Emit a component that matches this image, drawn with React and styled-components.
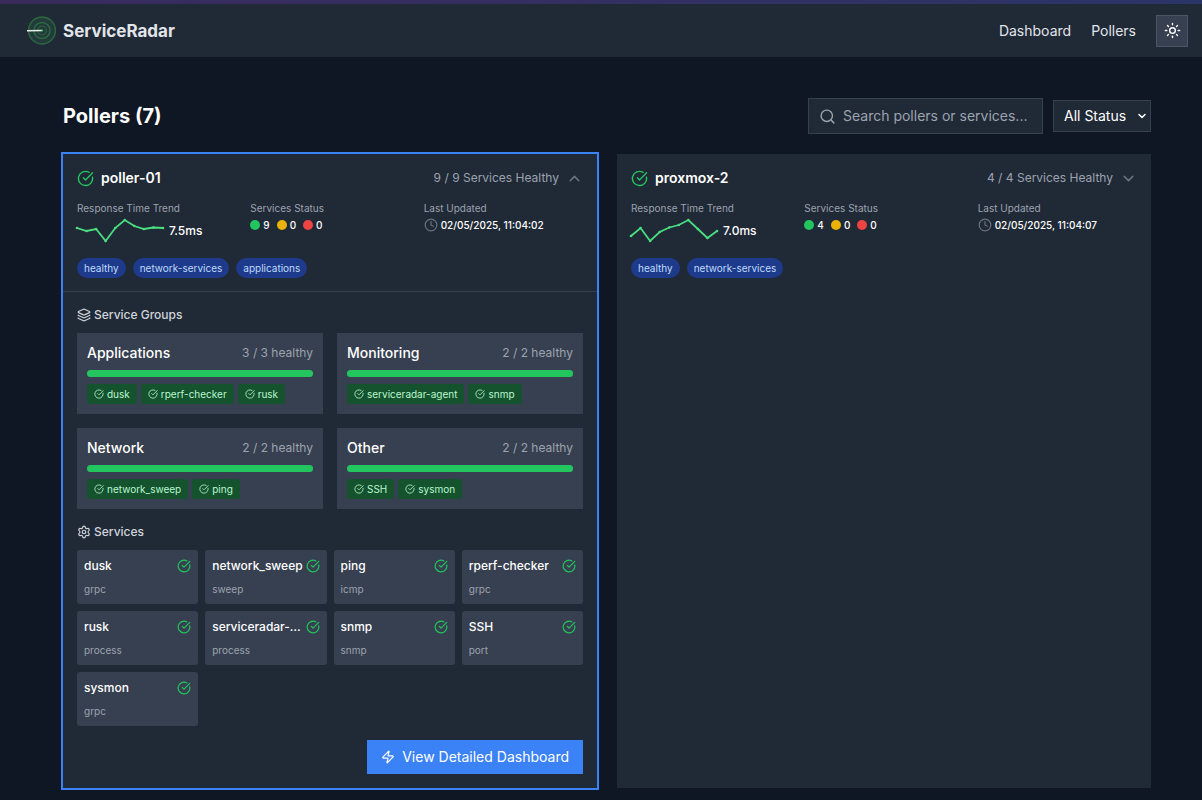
import React, { useState } from 'react';
import styled, { createGlobalStyle, ThemeProvider } from 'styled-components';
import {
  ChevronDown,
  ChevronUp,
  CircleCheckBig,
  Clock,
  Layers,
  Search,
  Settings,
  Sun,
  Zap,
} from 'lucide-react';

const theme = {
  page: '#0f1624',
  panel: '#202936',
  raised: '#374050',
  border: '#374050',
  accent: '#3b82f6',
  green: '#22c55e',
  yellow: '#eab308',
  red: '#ef4444',
  text: '#ffffff',
  soft: '#e2e5ea',
  muted: '#9ca3af',
  faint: '#6b7280',
};

const GlobalStyle = createGlobalStyle`
  *, *::before, *::after {
    box-sizing: border-box;
  }

  body {
    margin: 0;
    background: ${theme.page};
    color: ${theme.text};
    font-family: Inter, "Liberation Sans", sans-serif;
    font-size: 14px;
    line-height: 20px;
  }

  h1, h2, h3, h4, p, ul, dl, dd {
    margin: 0;
    padding: 0;
  }

  button, input, select {
    font: inherit;
    color: inherit;
  }

  svg {
    flex-shrink: 0;
  }
`;

const Page = styled.div`
  min-height: 100vh;
`;

const AccentStrip = styled.div`
  height: 4px;
  background: linear-gradient(90deg, #3a2a5c, #2b3566);
`;

const Header = styled.header`
  display: flex;
  align-items: center;
  justify-content: space-between;
  height: 53px;
  padding: 0 14px 0 27px;
  background: ${({ theme }) => theme.panel};
`;

const Brand = styled.a`
  display: flex;
  align-items: center;
  gap: 7px;
  color: ${({ theme }) => theme.soft};
  font-size: 17px;
  font-weight: 700;
  text-decoration: none;
`;

const Nav = styled.nav`
  display: flex;
  align-items: center;
  gap: 20px;
`;

const NavLink = styled.a`
  color: ${({ theme }) => theme.soft};
  text-decoration: none;
`;

const ThemeButton = styled.button`
  display: flex;
  align-items: center;
  justify-content: center;
  width: 32px;
  height: 32px;
  padding: 0;
  background: ${({ theme }) => theme.raised};
  border: 1px solid #4b5563;
`;

const Main = styled.main`
  padding: 41px 51px 10px 63px;
`;

const Toolbar = styled.div`
  display: flex;
  align-items: center;
  justify-content: space-between;
  margin-bottom: 20px;
`;

const Title = styled.h1`
  font-size: 20px;
  line-height: 28px;
  font-weight: 700;
`;

const Filters = styled.div`
  display: flex;
  align-items: center;
  gap: 10px;
`;

const SearchBox = styled.label`
  display: flex;
  align-items: center;
  gap: 7px;
  width: 235px;
  height: 36px;
  padding: 0 10px;
  background: ${({ theme }) => theme.panel};
  border: 1px solid ${({ theme }) => theme.border};
  color: ${({ theme }) => theme.muted};
`;

const SearchInput = styled.input`
  flex: 1;
  min-width: 0;
  padding: 0;
  background: none;
  border: none;
  outline: none;
  color: ${({ theme }) => theme.text};

  &::placeholder {
    color: ${({ theme }) => theme.muted};
    opacity: 1;
  }
`;

const SelectWrap = styled.div`
  display: grid;
  align-items: center;

  && > * {
    grid-area: 1 / 1;
  }

  svg {
    justify-self: end;
    margin-right: 3px;
    pointer-events: none;
  }
`;

const StatusSelect = styled.select`
  appearance: none;
  width: 98px;
  height: 32px;
  padding: 0 10px;
  background: ${({ theme }) => theme.panel};
  border: 1px solid ${({ theme }) => theme.border};
  border-radius: 0;
`;

const CardGrid = styled.div`
  display: grid;
  grid-template-columns: repeat(2, minmax(0, 1fr));
  gap: 20px;
`;

const Card = styled.article`
  background: ${({ theme }) => theme.panel};
  box-shadow: ${({ $open, theme }) => ($open ? `0 0 0 2px ${theme.accent}` : 'none')};
`;

const CardTop = styled.div`
  padding: 14px 14px 13px;
`;

const CardHeader = styled.button`
  display: flex;
  align-items: center;
  justify-content: space-between;
  width: 100%;
  height: 20px;
  margin-bottom: 13px;
  padding: 0;
  background: none;
  border: none;
  text-align: left;
`;

const PollerName = styled.span`
  display: flex;
  align-items: center;
  gap: 7px;
  font-weight: 600;

  svg {
    color: ${({ theme }) => theme.green};
  }
`;

const HealthSummary = styled.span`
  display: flex;
  align-items: center;
  gap: 7px;
  color: ${({ theme }) => theme.muted};
  font-size: 12px;

  svg {
    color: ${({ theme }) => theme.faint};
  }
`;

const Stats = styled.dl`
  display: grid;
  grid-template-columns: repeat(3, 1fr);
  gap: 14px;
`;

const StatLabel = styled.dt`
  color: ${({ theme }) => theme.muted};
  font-size: 10px;
  line-height: 14px;
`;

const StatValue = styled.dd`
  display: flex;
  align-items: center;
  gap: ${({ $gap }) => $gap || 3}px;
  min-height: 20px;
  font-size: ${({ $large }) => ($large ? 12 : 10)}px;
  font-weight: 500;

  > svg {
    color: ${({ theme }) => theme.faint};
  }
`;

const Spark = styled.svg`
  width: 86px;
  height: 32px;
  overflow: visible;
`;

const Count = styled.span`
  display: flex;
  align-items: center;
  gap: 3px;
`;

const Dot = styled.span`
  width: 10px;
  height: 10px;
  border-radius: 50%;
  background: ${({ theme, $tone }) => theme[$tone]};
`;

const Tags = styled.ul`
  display: flex;
  flex-wrap: wrap;
  gap: 7px;
  margin-top: 11px;
  list-style: none;
`;

const Tag = styled.li`
  padding: 3px 7px;
  border-radius: 10px;
  background: #1e3a8a;
  color: #bfdbfe;
  font-size: 10px;
  line-height: 14px;
`;

const CardBody = styled.div`
  display: flex;
  flex-direction: column;
  gap: 14px;
  padding: 14px;
  border-top: 1px solid ${({ theme }) => theme.border};
`;

const SectionTitle = styled.h3`
  display: flex;
  align-items: center;
  gap: 3px;
  margin-bottom: 10px;
  color: #d1d5db;
  font-size: 12px;
  line-height: 17px;
  font-weight: 500;
`;

const GroupGrid = styled.div`
  display: grid;
  grid-template-columns: repeat(2, minmax(0, 1fr));
  gap: 14px;
`;

const Group = styled.div`
  display: flex;
  flex-direction: column;
  gap: 7px;
  padding: 10px;
  background: ${({ theme }) => theme.raised};
`;

const GroupHead = styled.div`
  display: flex;
  align-items: center;
  justify-content: space-between;
`;

const GroupName = styled.h4`
  font-size: 14px;
  font-weight: 500;
`;

const GroupCount = styled.span`
  color: ${({ theme }) => theme.muted};
  font-size: 12px;
`;

const Bar = styled.div`
  height: 7px;
  border-radius: 4px;
  background: #4b5563;
`;

const BarFill = styled.div`
  height: 100%;
  border-radius: 4px;
  background: ${({ theme }) => theme.green};
`;

const Chips = styled.ul`
  display: flex;
  flex-wrap: wrap;
  gap: 4px;
  list-style: none;
`;

const Chip = styled.li`
  display: flex;
  align-items: center;
  gap: 3px;
  padding: 3px 7px;
  border-radius: 3px;
  background: #14532d;
  color: #bbf7d0;
  font-size: 10px;
  line-height: 14px;
`;

const ServiceGrid = styled.div`
  display: grid;
  grid-template-columns: repeat(4, minmax(0, 1fr));
  gap: 7px;
`;

const Service = styled.div`
  padding: 7px 7px 8px;
  border-radius: 3px;
  background: ${({ theme }) => theme.raised};
`;

const ServiceHead = styled.div`
  display: flex;
  align-items: center;
  justify-content: space-between;
  margin-bottom: 8px;

  svg {
    color: ${({ theme }) => theme.green};
  }
`;

const ServiceName = styled.span`
  overflow: hidden;
  font-size: 12px;
  line-height: 17px;
  font-weight: 500;
  text-overflow: ellipsis;
  white-space: nowrap;
`;

const ServiceType = styled.p`
  color: ${({ theme }) => theme.muted};
  font-size: 10px;
  line-height: 14px;
`;

const DashboardButton = styled.button`
  display: flex;
  align-items: center;
  align-self: flex-end;
  gap: 7px;
  height: 34px;
  padding: 0 14px;
  background: ${({ theme }) => theme.accent};
  border: none;
`;

const pollers = [
  {
    name: 'poller-01',
    healthy: 9,
    response: '7.5ms',
    updated: '02/05/2025, 11:04:02',
    tags: ['healthy', 'network-services', 'applications'],
    trend: [13, 16, 14, 26, 13, 5, 11, 14, 12.5, 13],
    groups: [
      { name: 'Applications', services: ['dusk', 'rperf-checker', 'rusk'] },
      { name: 'Monitoring', services: ['serviceradar-agent', 'snmp'] },
      { name: 'Network', services: ['network_sweep', 'ping'] },
      { name: 'Other', services: ['SSH', 'sysmon'] },
    ],
    services: [
      ['dusk', 'grpc'],
      ['network_sweep', 'sweep'],
      ['ping', 'icmp'],
      ['rperf-checker', 'grpc'],
      ['rusk', 'process'],
      ['serviceradar-agent', 'process'],
      ['snmp', 'snmp'],
      ['SSH', 'port'],
      ['sysmon', 'grpc'],
    ],
  },
  {
    name: 'proxmox-2',
    healthy: 4,
    response: '7.0ms',
    updated: '02/05/2025, 11:04:07',
    tags: ['healthy', 'network-services'],
    trend: [21, 13, 26, 17, 12.5, 10, 5, 14, 23, 16],
    groups: [],
    services: [],
  },
];

const Logo = () => (
  <svg width="29" height="29" viewBox="0 0 29 29" fill="none" aria-hidden="true">
    <circle cx="15" cy="14.5" r="13.4" fill="#223a3a" stroke="#2c6340" strokeWidth="1.6" />
    <circle cx="15" cy="14.5" r="8" stroke="#2c6a43" strokeWidth="1.5" />
    <circle cx="15" cy="14.5" r="4.4" stroke="#2c5f42" strokeWidth="1.3" />
    <path d="M0 14 15 13.8v1.4L0 15.4z" fill="#e8efe9" />
    <circle cx="15.2" cy="14.5" r="1" fill="#35d04a" />
  </svg>
);

const Sparkline = ({ values }) => {
  const points = values.map((y, i) => [(i * 86) / (values.length - 1), y]);
  return (
    <Spark viewBox="0 0 86 32" aria-hidden="true">
      <polyline
        points={points.map((p) => p.join(',')).join(' ')}
        fill="none"
        stroke="#4ade80"
        strokeWidth="1.8"
      />
      {points.map(([x, y]) => (
        <circle key={x} cx={x} cy={y} r="1.3" fill="#4ade80" />
      ))}
    </Spark>
  );
};

const PollerDetails = ({ poller }) => (
  <CardBody>
    <section>
      <SectionTitle>
        <Layers size={14} />
        Service Groups
      </SectionTitle>
      <GroupGrid>
        {poller.groups.map(({ name, services }) => (
          <Group key={name}>
            <GroupHead>
              <GroupName>{name}</GroupName>
              <GroupCount>{`${services.length} / ${services.length} healthy`}</GroupCount>
            </GroupHead>
            <Bar>
              <BarFill />
            </Bar>
            <Chips>
              {services.map((service) => (
                <Chip key={service}>
                  <CircleCheckBig size={10} />
                  {service}
                </Chip>
              ))}
            </Chips>
          </Group>
        ))}
      </GroupGrid>
    </section>
    <section>
      <SectionTitle>
        <Settings size={14} />
        Services
      </SectionTitle>
      <ServiceGrid>
        {poller.services.map(([name, type]) => (
          <Service key={name}>
            <ServiceHead>
              <ServiceName>{name}</ServiceName>
              <CircleCheckBig size={14} />
            </ServiceHead>
            <ServiceType>{type}</ServiceType>
          </Service>
        ))}
      </ServiceGrid>
    </section>
    <DashboardButton type="button">
      <Zap size={14} />
      View Detailed Dashboard
    </DashboardButton>
  </CardBody>
);

const PollerCard = ({ poller, open, onToggle }) => {
  const Chevron = open ? ChevronUp : ChevronDown;

  return (
    <Card $open={open}>
      <CardTop>
        <CardHeader type="button" aria-expanded={open} onClick={onToggle}>
          <PollerName>
            <CircleCheckBig size={17} />
            {poller.name}
          </PollerName>
          <HealthSummary>
            {`${poller.healthy} / ${poller.healthy} Services Healthy`}
            <Chevron size={17} />
          </HealthSummary>
        </CardHeader>
        <Stats>
          <div>
            <StatLabel>Response Time Trend</StatLabel>
            <StatValue $large $gap={6}>
              <Sparkline values={poller.trend} />
              {poller.response}
            </StatValue>
          </div>
          <div>
            <StatLabel>Services Status</StatLabel>
            <StatValue $gap={7}>
              <Count>
                <Dot $tone="green" />
                {poller.healthy}
              </Count>
              <Count>
                <Dot $tone="yellow" />0
              </Count>
              <Count>
                <Dot $tone="red" />0
              </Count>
            </StatValue>
          </div>
          <div>
            <StatLabel>Last Updated</StatLabel>
            <StatValue>
              <Clock size={14} />
              {poller.updated}
            </StatValue>
          </div>
        </Stats>
        <Tags>
          {poller.tags.map((tag) => (
            <Tag key={tag}>{tag}</Tag>
          ))}
        </Tags>
      </CardTop>
      {open && <PollerDetails poller={poller} />}
    </Card>
  );
};

const App = () => {
  const [openPoller, setOpenPoller] = useState('poller-01');

  return (
    <ThemeProvider theme={theme}>
      <GlobalStyle />
      <Page>
        <AccentStrip />
        <Header>
          <Brand href="#home">
            <Logo />
            ServiceRadar
          </Brand>
          <Nav>
            <NavLink href="#dashboard">Dashboard</NavLink>
            <NavLink href="#pollers">Pollers</NavLink>
            <ThemeButton type="button" aria-label="Toggle theme">
              <Sun size={17} />
            </ThemeButton>
          </Nav>
        </Header>
        <Main>
          <Toolbar>
            <Title>Pollers (7)</Title>
            <Filters>
              <SearchBox>
                <Search size={17} />
                <SearchInput
                  type="text"
                  aria-label="Search"
                  placeholder="Search pollers or services..."
                />
              </SearchBox>
              <SelectWrap>
                <StatusSelect aria-label="Status">
                  <option>All Status</option>
                </StatusSelect>
                <ChevronDown size={12} strokeWidth={3} />
              </SelectWrap>
            </Filters>
          </Toolbar>
          <CardGrid>
            {pollers.map((poller) => (
              <PollerCard
                key={poller.name}
                poller={poller}
                open={openPoller === poller.name}
                onToggle={() => setOpenPoller(openPoller === poller.name ? null : poller.name)}
              />
            ))}
          </CardGrid>
        </Main>
      </Page>
    </ThemeProvider>
  );
};

export default App;
